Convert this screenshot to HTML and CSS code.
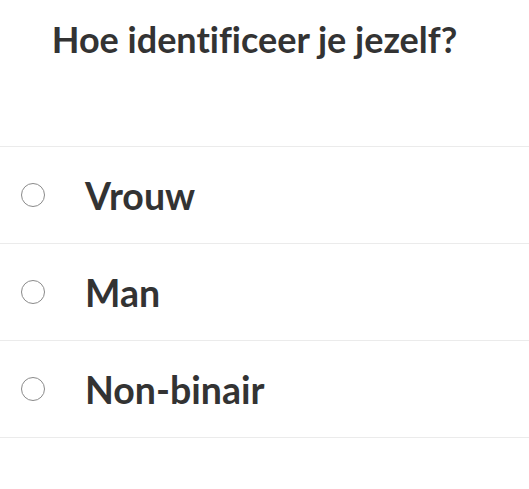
FILE: index.html
```html
<!DOCTYPE html>
<html lang="nl">
<head>
<meta charset="utf-8">
<link rel="stylesheet" href="styles.css">
</head>
<body>
<div class="page">
  <h1 class="title">Hoe identificeer je jezelf?</h1>
  <ul class="options">
    <li class="option"><span class="radio"></span><span class="label">Vrouw</span></li>
    <li class="option"><span class="radio"></span><span class="label">Man</span></li>
    <li class="option"><span class="radio"></span><span class="label">Non-binair</span></li>
  </ul>
</div>
</body>
</html>
```
FILE: styles.css
```css
html, body {
  margin: 0;
  padding: 0;
  background: #fff;
}
.page {
  font-family: Lato, "Open Sans", sans-serif;
  font-variant-ligatures: none;
  color: #333;
}
.title {
  margin: 0;
  height: 146px;
  box-sizing: border-box;
  padding-top: 14px;
  padding-right: 20px;
  text-align: center;
  font-size: 36px;
  font-weight: 700;
  line-height: 50px;
}
.options {
  list-style: none;
  margin: 0;
  padding: 0;
  border-top: 1px solid #ebebeb;
}
.option {
  display: flex;
  align-items: center;
  height: 96px;
  border-bottom: 1px solid #ebebeb;
}
.radio {
  width: 22px;
  height: 22px;
  border: 1px solid #8a8a8a;
  border-radius: 50%;
  margin-left: 21px;
  flex: none;
}
.label {
  margin-left: 40px;
  font-size: 37.5px;
  font-weight: 700;
}
```
